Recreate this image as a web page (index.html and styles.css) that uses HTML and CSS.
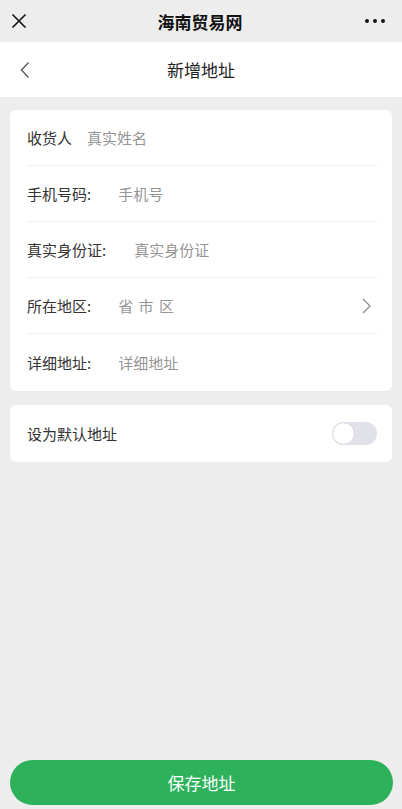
FILE: index.html
```html
<!DOCTYPE html>
<html lang="zh">
<head>
<meta charset="utf-8">
<meta name="viewport" content="width=device-width, initial-scale=1">
<title>新增地址</title>
<link rel="stylesheet" href="styles.css">
</head>
<body>
<div class="page">
  <header class="topbar">
    <svg class="close" width="16" height="16" viewBox="0 0 16 16"><path d="M1.5 1.5L14.5 14.5M14.5 1.5L1.5 14.5" stroke="#111" stroke-width="1.6" fill="none"/></svg>
    <div class="topbar-title">海南贸易网</div>
    <div class="more"><span></span><span></span><span></span></div>
  </header>
  <nav class="navbar">
    <svg class="back" width="10" height="18" viewBox="0 0 10 18"><path d="M8.5 1.5L1.5 9L8.5 16.5" stroke="#555" stroke-width="1.3" fill="none"/></svg>
    <div class="nav-title">新增地址</div>
  </nav>
  <main class="content">
    <section class="card form">
      <div class="row"><span class="label">收货人</span><span class="ph ph-a">真实姓名</span></div>
      <div class="row"><span class="label">手机号码:</span><span class="ph ph-b">手机号</span></div>
      <div class="row"><span class="label">真实身份证:</span><span class="ph ph-c">真实身份证</span></div>
      <div class="row"><span class="label">所在地区:</span><span class="ph ph-b spaced">省 市 区</span>
        <svg class="chev" width="9" height="16" viewBox="0 0 9 16"><path d="M1 1L8 8L1 15" stroke="#888" stroke-width="1.2" fill="none"/></svg>
      </div>
      <div class="row"><span class="label">详细地址:</span><span class="ph ph-b">详细地址</span></div>
    </section>
    <section class="card default-row">
      <span class="label">设为默认地址</span>
      <div class="toggle"><div class="knob"></div></div>
    </section>
  </main>
  <footer class="footer">
    <button class="save">保存地址</button>
  </footer>
</div>
</body>
</html>
```
FILE: styles.css
```css
* { box-sizing: border-box; }
html, body { margin: 0; padding: 0; }
body {
  background: #ededed;
  font-family: "Noto Sans CJK SC", "Noto Sans", sans-serif;
  color: #333;
}
.page {
  width: 402px;
  height: 809px;
  display: flex;
  flex-direction: column;
}
.topbar {
  height: 42px;
  background: #ededed;
  display: grid;
  grid-template-columns: 40px 1fr 40px;
  align-items: center;
  padding: 0 17px 0 11px;
}
.close { display: block; }
.topbar-title {
  font-size: 17px;
  font-weight: 700;
  color: #111;
  text-align: center;
  padding-left: 4px;
}
.more { display: flex; gap: 4px; justify-content: flex-end; }
.more span { width: 4px; height: 4px; border-radius: 50%; background: #111; }
.navbar {
  height: 55px;
  background: #fff;
  display: flex;
  align-items: center;
  padding-left: 20px;
}
.back { display: block; }
.nav-title {
  flex: 1;
  text-align: center;
  font-size: 17px;
  color: #222;
  margin-right: 30px;
}
.content {
  flex: 1;
  padding: 13px 10px 0 10px;
  display: flex;
  flex-direction: column;
  gap: 14px;
}
.card {
  background: #fff;
  border-radius: 6px;
}
.form { padding: 0 14px 0 17px; }
.row {
  height: 56px;
  display: flex;
  align-items: center;
  border-bottom: 1px solid #f0f0f0;
}
.row:last-child { border-bottom: none; height: 57px; }
.label { font-size: 15px; color: #333; }
.ph { font-size: 15px; color: #959595; }
.ph-a { margin-left: 15px; }
.ph-b { margin-left: 27px; }
.ph-c { margin-left: 28px; }
.spaced { word-spacing: 2px; }
.chev { margin-left: auto; margin-right: 7px; display: block; }
.default-row {
  height: 57px;
  display: flex;
  align-items: center;
  justify-content: space-between;
  padding: 0 15px 0 17px;
}
.toggle {
  width: 45px;
  height: 23px;
  border-radius: 12px;
  background: #e1e1ea;
  padding: 1px;
  display: flex;
  align-items: center;
}
.knob {
  width: 21px;
  height: 21px;
  border-radius: 50%;
  background: #fff;
  box-shadow: 0 0 1px rgba(0,0,0,0.2);
}
.footer {
  padding: 0 9px 4px 10px;
}
.save {
  width: 100%;
  height: 45px;
  border: none;
  border-radius: 23px;
  background: #2db25b;
  color: #fff;
  font-size: 17px;
  font-family: "Noto Sans CJK SC", "Noto Sans", sans-serif;
}
```
